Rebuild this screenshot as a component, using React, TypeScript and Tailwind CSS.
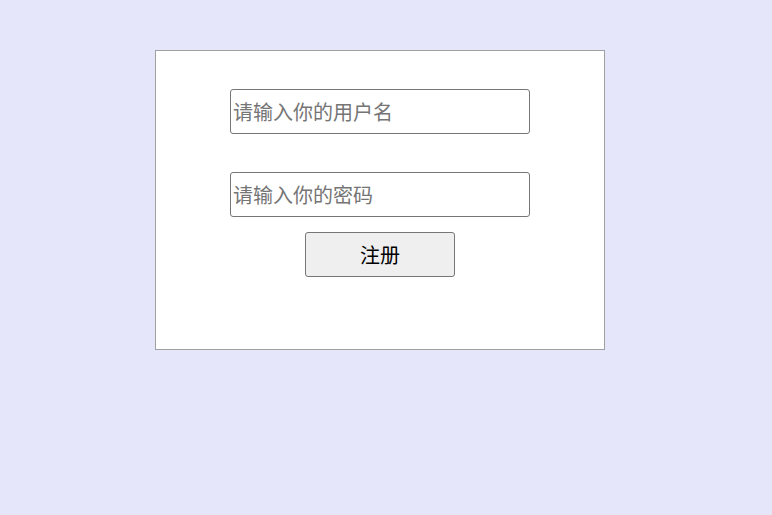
export default function App() {
  return (
    <div className="min-h-screen bg-[#e6e6fa] pt-[50px] pl-[155px] font-['Noto_Sans_CJK_SC',sans-serif]">
      <div className="w-[450px] h-[300px] bg-white border border-[#a0a0a0] flex flex-col items-center pt-[38px]">
        <input
          type="text"
          placeholder="请输入你的用户名"
          className="w-[300px] h-[45px] px-[2px] text-[20px] border border-[#767676] rounded-[3px] placeholder:text-[#757575] outline-none"
        />
        <input
          type="password"
          placeholder="请输入你的密码"
          className="mt-[38px] w-[300px] h-[45px] px-[2px] text-[20px] border border-[#767676] rounded-[3px] placeholder:text-[#757575] outline-none"
        />
        <button className="mt-[15px] w-[150px] h-[45px] text-[20px] text-black bg-[#efefef] border border-[#767676] rounded-[3px]">
          注册
        </button>
      </div>
    </div>
  );
}
